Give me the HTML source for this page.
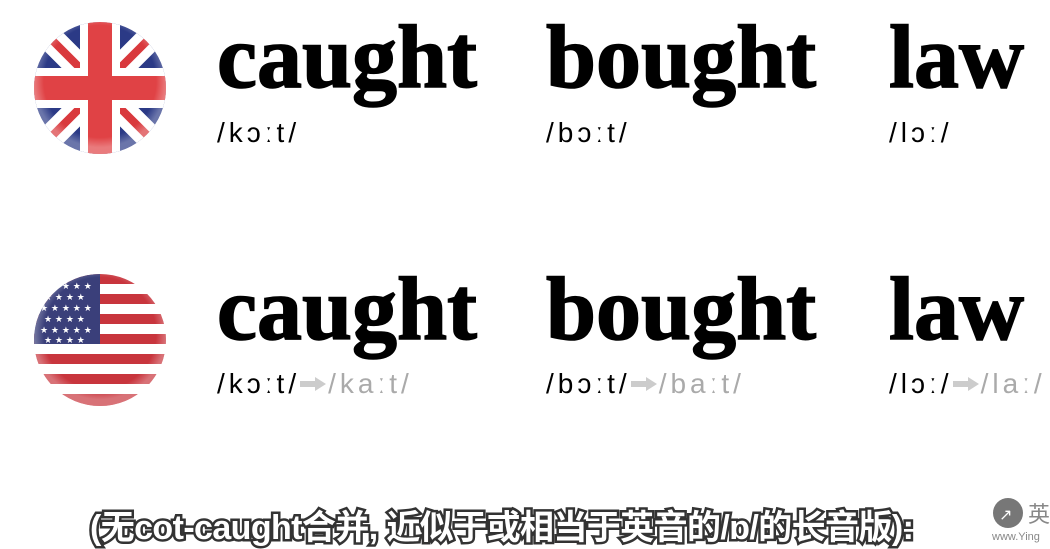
<!DOCTYPE html>
<html><head><meta charset="utf-8"><style>
body{margin:0;width:1050px;height:546px;background:#fff;position:relative;overflow:hidden;font-family:"Liberation Sans",sans-serif}
.w{position:absolute;font-family:"Liberation Serif",serif;font-weight:bold;font-size:90px;line-height:1;color:#000;letter-spacing:0px;-webkit-text-stroke:1.5px #000}
.p{position:absolute;font-size:28px;line-height:1;color:#000;letter-spacing:4px;white-space:nowrap}
.g{color:#aaa}
.arr{display:inline-block;width:26px;height:14px;vertical-align:2px;margin:0 2px 0 0}
.sub{position:absolute;left:90px;top:500px;font-family:"Liberation Sans","Noto Sans CJK SC",sans-serif;font-size:34px;font-weight:bold;color:#fff;letter-spacing:-0.6px;-webkit-text-stroke:5px #333;paint-order:stroke fill;white-space:nowrap}
</style></head><body>
<svg style="position:absolute;left:0;top:0" width="1050" height="546">
<defs>
<clipPath id="c1"><circle cx="100" cy="88" r="66"/></clipPath>
<clipPath id="c2"><circle cx="100" cy="340" r="66"/></clipPath>
<radialGradient id="sh" cx="50%" cy="45%" r="50%"><stop offset="85%" stop-color="#fff" stop-opacity="0"/><stop offset="100%" stop-color="#fff" stop-opacity="0.3"/></radialGradient>
</defs>
<g clip-path="url(#c1)">
<rect x="34" y="22" width="132" height="132" fill="#2b3a86"/>
<path d="M34 22L166 154M166 22L34 154" stroke="#fff" stroke-width="26"/>
<path d="M34 22L166 154M166 22L34 154" stroke="#d9393d" stroke-width="8"/>
<rect x="34" y="68" width="132" height="40" fill="#fff"/>
<rect x="80" y="22" width="40" height="132" fill="#fff"/>
<rect x="34" y="76" width="132" height="24" fill="#e04245"/>
<rect x="88" y="22" width="24" height="132" fill="#e04245"/>
<circle cx="100" cy="88" r="66" fill="url(#sh)"/>
</g>
<g clip-path="url(#c2)">
<rect x="34" y="274" width="132" height="132" fill="#fff"/>
<g fill="#c8353d">
<rect x="34" y="274" width="132" height="10"/><rect x="34" y="294" width="132" height="10"/><rect x="34" y="314" width="132" height="10"/><rect x="34" y="334" width="132" height="10"/><rect x="34" y="354" width="132" height="10"/><rect x="34" y="374" width="132" height="10"/><rect x="34" y="394" width="132" height="12"/>
</g>
<rect x="34" y="274" width="66" height="70" fill="#3a3f7a"/>
<g fill="#fff" font-size="9" font-family="DejaVu Sans">
<text x="40" y="289">★ ★ ★ ★ ★</text><text x="44" y="300">★ ★ ★ ★</text><text x="40" y="311">★ ★ ★ ★ ★</text><text x="44" y="322">★ ★ ★ ★</text><text x="40" y="333">★ ★ ★ ★ ★</text><text x="44" y="343">★ ★ ★ ★</text>
</g>
<circle cx="100" cy="340" r="66" fill="url(#sh)"/>
</g>
<circle cx="1008" cy="513" r="15" fill="#777"/>
<text x="999" y="520" fill="#fff" font-size="16" font-family="DejaVu Sans">↗</text>
<text x="1028" y="522" fill="#888" font-size="22" font-family="Noto Sans CJK SC">英</text>
<text x="992" y="540" fill="#888" font-size="11" font-family="Liberation Sans">www.Ying</text>
</svg>
<div class="w" style="left:217px;top:13px">caught</div>
<div class="w" style="left:546px;top:13px">bought</div>
<div class="w" style="left:889px;top:13px">law</div>
<div class="p" style="left:217px;top:119px">/kɔːt/</div>
<div class="p" style="left:546px;top:119px">/bɔːt/</div>
<div class="p" style="left:889px;top:119px">/lɔː/</div>
<div class="w" style="left:217px;top:265px">caught</div>
<div class="w" style="left:546px;top:265px">bought</div>
<div class="w" style="left:889px;top:265px">law</div>
<div class="p" style="left:217px;top:370px">/kɔːt/<svg class="arr" viewBox="0 0 26 14"><path d="M0 4h15V0l11 7-11 7v-4H0z" fill="#ccc"/></svg><span class="g">/kaːt/</span></div>
<div class="p" style="left:546px;top:370px">/bɔːt/<svg class="arr" viewBox="0 0 26 14"><path d="M0 4h15V0l11 7-11 7v-4H0z" fill="#ccc"/></svg><span class="g">/baːt/</span></div>
<div class="p" style="left:889px;top:370px">/lɔː/<svg class="arr" viewBox="0 0 26 14"><path d="M0 4h15V0l11 7-11 7v-4H0z" fill="#ccc"/></svg><span class="g">/laː/</span></div>
<div class="sub">(无cot-caught合并, 近似于或相当于英音的/ɒ/的长音版):</div>
</body></html>
